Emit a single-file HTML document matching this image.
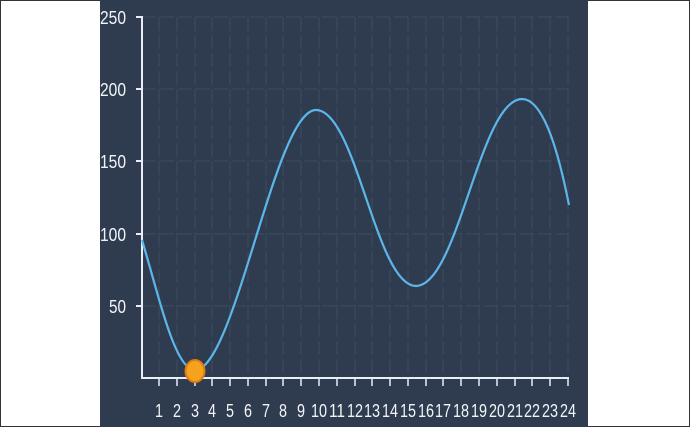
<!DOCTYPE html>
<html><head><style>
html,body{margin:0;padding:0;background:#fff;}
body{width:690px;height:427px;overflow:hidden;position:relative;}
</style></head><body>
<svg width="690" height="427" viewBox="0 0 690 427" style="position:absolute;left:0;top:0">
<rect x="0.5" y="0.5" width="689" height="426" fill="#fff" stroke="#333" stroke-width="1"/>
<rect x="100" y="0" width="488" height="427" fill="#2f3c4f"/>
<g stroke="#44546a" stroke-width="1" stroke-dasharray="14 4" opacity="0.7">
<line x1="159" y1="17" x2="159" y2="378"/><line x1="177" y1="17" x2="177" y2="378"/><line x1="195" y1="17" x2="195" y2="378"/><line x1="212" y1="17" x2="212" y2="378"/><line x1="230" y1="17" x2="230" y2="378"/><line x1="248" y1="17" x2="248" y2="378"/><line x1="266" y1="17" x2="266" y2="378"/><line x1="283" y1="17" x2="283" y2="378"/><line x1="301" y1="17" x2="301" y2="378"/><line x1="319" y1="17" x2="319" y2="378"/><line x1="337" y1="17" x2="337" y2="378"/><line x1="355" y1="17" x2="355" y2="378"/><line x1="372" y1="17" x2="372" y2="378"/><line x1="390" y1="17" x2="390" y2="378"/><line x1="408" y1="17" x2="408" y2="378"/><line x1="426" y1="17" x2="426" y2="378"/><line x1="443" y1="17" x2="443" y2="378"/><line x1="461" y1="17" x2="461" y2="378"/><line x1="479" y1="17" x2="479" y2="378"/><line x1="497" y1="17" x2="497" y2="378"/><line x1="515" y1="17" x2="515" y2="378"/><line x1="532" y1="17" x2="532" y2="378"/><line x1="550" y1="17" x2="550" y2="378"/><line x1="568" y1="17" x2="568" y2="378"/>
<line x1="142" y1="17" x2="569" y2="17"/><line x1="142" y1="89" x2="569" y2="89"/><line x1="142" y1="161" x2="569" y2="161"/><line x1="142" y1="234" x2="569" y2="234"/><line x1="142" y1="306" x2="569" y2="306"/>
</g>
<g stroke="#e8eef4" stroke-width="2" fill="none">
<line x1="142" y1="16" x2="142" y2="379"/>
<line x1="141" y1="378" x2="569" y2="378"/>
<line x1="136" y1="17" x2="142" y2="17"/><line x1="136" y1="89" x2="142" y2="89"/><line x1="136" y1="161" x2="142" y2="161"/><line x1="136" y1="234" x2="142" y2="234"/><line x1="136" y1="306" x2="142" y2="306"/>
</g>
<g stroke="#e8eef4" stroke-width="1.5">
<line x1="159" y1="378" x2="159" y2="386"/><line x1="177" y1="378" x2="177" y2="386"/><line x1="195" y1="378" x2="195" y2="386"/><line x1="212" y1="378" x2="212" y2="386"/><line x1="230" y1="378" x2="230" y2="386"/><line x1="248" y1="378" x2="248" y2="386"/><line x1="266" y1="378" x2="266" y2="386"/><line x1="283" y1="378" x2="283" y2="386"/><line x1="301" y1="378" x2="301" y2="386"/><line x1="319" y1="378" x2="319" y2="386"/><line x1="337" y1="378" x2="337" y2="386"/><line x1="355" y1="378" x2="355" y2="386"/><line x1="372" y1="378" x2="372" y2="386"/><line x1="390" y1="378" x2="390" y2="386"/><line x1="408" y1="378" x2="408" y2="386"/><line x1="426" y1="378" x2="426" y2="386"/><line x1="443" y1="378" x2="443" y2="386"/><line x1="461" y1="378" x2="461" y2="386"/><line x1="479" y1="378" x2="479" y2="386"/><line x1="497" y1="378" x2="497" y2="386"/><line x1="515" y1="378" x2="515" y2="386"/><line x1="532" y1="378" x2="532" y2="386"/><line x1="550" y1="378" x2="550" y2="386"/><line x1="568" y1="378" x2="568" y2="386"/>
</g>
<path d="M142,240 C160,300 175,370 195,370 C235,370 275,110 316,110 C356,110 376,286 416,286 C458,286 480,99 522,99 C545,99 560,160 569,205" fill="none" stroke="#5cb6ea" stroke-width="2.2"/>
<ellipse cx="195" cy="371" rx="9.5" ry="11" fill="#f5a21e" stroke="#e07a12" stroke-width="2"/>
<g fill="#f2f5f8" font-family="'Liberation Sans',sans-serif" font-size="18" lengthAdjust="spacingAndGlyphs">
<g text-anchor="end">
<text x="126" y="24" textLength="26" lengthAdjust="spacingAndGlyphs">250</text><text x="126" y="96" textLength="26" lengthAdjust="spacingAndGlyphs">200</text><text x="126" y="168" textLength="26" lengthAdjust="spacingAndGlyphs">150</text><text x="126" y="241" textLength="26" lengthAdjust="spacingAndGlyphs">100</text><text x="126" y="313" textLength="17" lengthAdjust="spacingAndGlyphs">50</text>
</g>
<g text-anchor="middle">
<text x="159" y="417" textLength="8" lengthAdjust="spacingAndGlyphs">1</text><text x="177" y="417" textLength="8" lengthAdjust="spacingAndGlyphs">2</text><text x="195" y="417" textLength="8" lengthAdjust="spacingAndGlyphs">3</text><text x="212" y="417" textLength="8" lengthAdjust="spacingAndGlyphs">4</text><text x="230" y="417" textLength="8" lengthAdjust="spacingAndGlyphs">5</text><text x="248" y="417" textLength="8" lengthAdjust="spacingAndGlyphs">6</text><text x="266" y="417" textLength="8" lengthAdjust="spacingAndGlyphs">7</text><text x="283" y="417" textLength="8" lengthAdjust="spacingAndGlyphs">8</text><text x="301" y="417" textLength="8" lengthAdjust="spacingAndGlyphs">9</text><text x="319" y="417" textLength="16" lengthAdjust="spacingAndGlyphs">10</text><text x="337" y="417" textLength="16" lengthAdjust="spacingAndGlyphs">11</text><text x="355" y="417" textLength="16" lengthAdjust="spacingAndGlyphs">12</text><text x="372" y="417" textLength="16" lengthAdjust="spacingAndGlyphs">13</text><text x="390" y="417" textLength="16" lengthAdjust="spacingAndGlyphs">14</text><text x="408" y="417" textLength="16" lengthAdjust="spacingAndGlyphs">15</text><text x="426" y="417" textLength="16" lengthAdjust="spacingAndGlyphs">16</text><text x="443" y="417" textLength="16" lengthAdjust="spacingAndGlyphs">17</text><text x="461" y="417" textLength="16" lengthAdjust="spacingAndGlyphs">18</text><text x="479" y="417" textLength="16" lengthAdjust="spacingAndGlyphs">19</text><text x="497" y="417" textLength="16" lengthAdjust="spacingAndGlyphs">20</text><text x="515" y="417" textLength="16" lengthAdjust="spacingAndGlyphs">21</text><text x="532" y="417" textLength="16" lengthAdjust="spacingAndGlyphs">22</text><text x="550" y="417" textLength="16" lengthAdjust="spacingAndGlyphs">23</text><text x="568" y="417" textLength="16" lengthAdjust="spacingAndGlyphs">24</text>
</g>
</g>
</svg>
</body></html>
